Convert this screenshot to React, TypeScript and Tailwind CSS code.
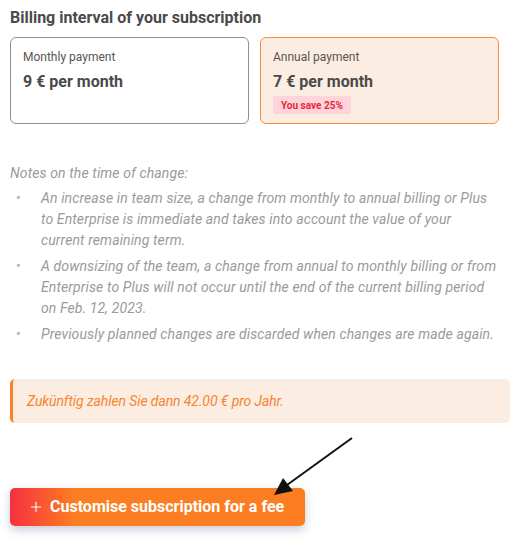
import { Plus } from "lucide-react"

const notes = [
  "An increase in team size, a change from monthly to annual billing or Plus to Enterprise is immediate and takes into account the value of your current remaining term.",
  "A downsizing of the team, a change from annual to monthly billing or from Enterprise to Plus will not occur until the end of the current billing period on Feb. 12, 2023.",
  "Previously planned changes are discarded when changes are made again.",
]

export default function App() {
  return (
    <div className="relative w-[532px] h-[554px] bg-white px-[10px] pt-[8px] font-['Roboto',sans-serif]">
      <h2 className="text-[16px] leading-[20px] font-bold text-[#4a4a4a]">
        Billing interval of your subscription
      </h2>

      {/* Auswahl Zahlungsintervall */}
      <div className="mt-[9px] flex gap-[11px]">
        <div className="w-[239px] h-[87px] rounded-[6px] border border-[#8f8f8f] px-[12px] pt-[11px]">
          <div className="text-[12px] leading-[16px] text-[#555]">Monthly payment</div>
          <div className="mt-[7px] text-[16px] leading-[20px] font-bold text-[#4a4a4a]">9 € per month</div>
        </div>
        <div className="w-[239px] h-[87px] rounded-[6px] border border-[#fb8a3c] bg-[#fcede2] px-[12px] pt-[11px]">
          <div className="text-[12px] leading-[16px] text-[#555]">Annual payment</div>
          <div className="mt-[7px] text-[16px] leading-[20px] font-bold text-[#4a4a4a]">7 € per month</div>
          <div className="mt-[4px] flex h-[18px] w-fit items-center rounded-[3px] bg-[#ffd3da] px-[8px] text-[10px] font-bold text-[#e8263f]">
            You save 25%
          </div>
        </div>
      </div>

      {/* Hinweise */}
      <div className="mt-[39px] w-[500px] text-[14px] leading-[21px] italic tracking-[0.12px] text-[#9a9a9a]">
        <p>Notes on the time of change:</p>
        <ul className="mt-[4px] flex flex-col gap-[5px]">
          {notes.map((n) => (
            <li key={n} className="flex">
              <span className="w-[31px] shrink-0 pl-[6px] not-italic text-[#b0b0b0]">•</span>
              <span className="pr-[12px]">{n}</span>
            </li>
          ))}
        </ul>
      </div>

      <div className="mt-[34px] flex h-[44px] w-[500px] items-center rounded-[5px] border-l-[3px] border-[#fb7f25] bg-[#fcede2] pl-[14px]">
        <span className="text-[14px] italic tracking-[-0.1px] text-[#f6852f]">Zukünftig zahlen Sie dann 42.00 € pro Jahr.</span>
      </div>

      <button className="mt-[65px] flex h-[38px] w-[295px] items-center gap-[6px] rounded-[5px] bg-[linear-gradient(90deg,#f5303f_0px,#fd7e22_65px)] pl-[18px] text-[16px] font-bold text-white shadow-[0_4px_10px_rgba(40,60,100,0.25)]">
        <Plus className="h-[16px] w-[16px]" strokeWidth={1.6} />
        Customise subscription for a fee
      </button>

      {/* Pfeil */}
      <svg className="absolute left-0 top-0 pointer-events-none" width="532" height="554">
        <line x1="352" y1="438" x2="287" y2="485" stroke="#111" strokeWidth="2" />
        <polygon points="274,495 283,478 293,491" fill="#111" />
      </svg>
    </div>
  )
}
